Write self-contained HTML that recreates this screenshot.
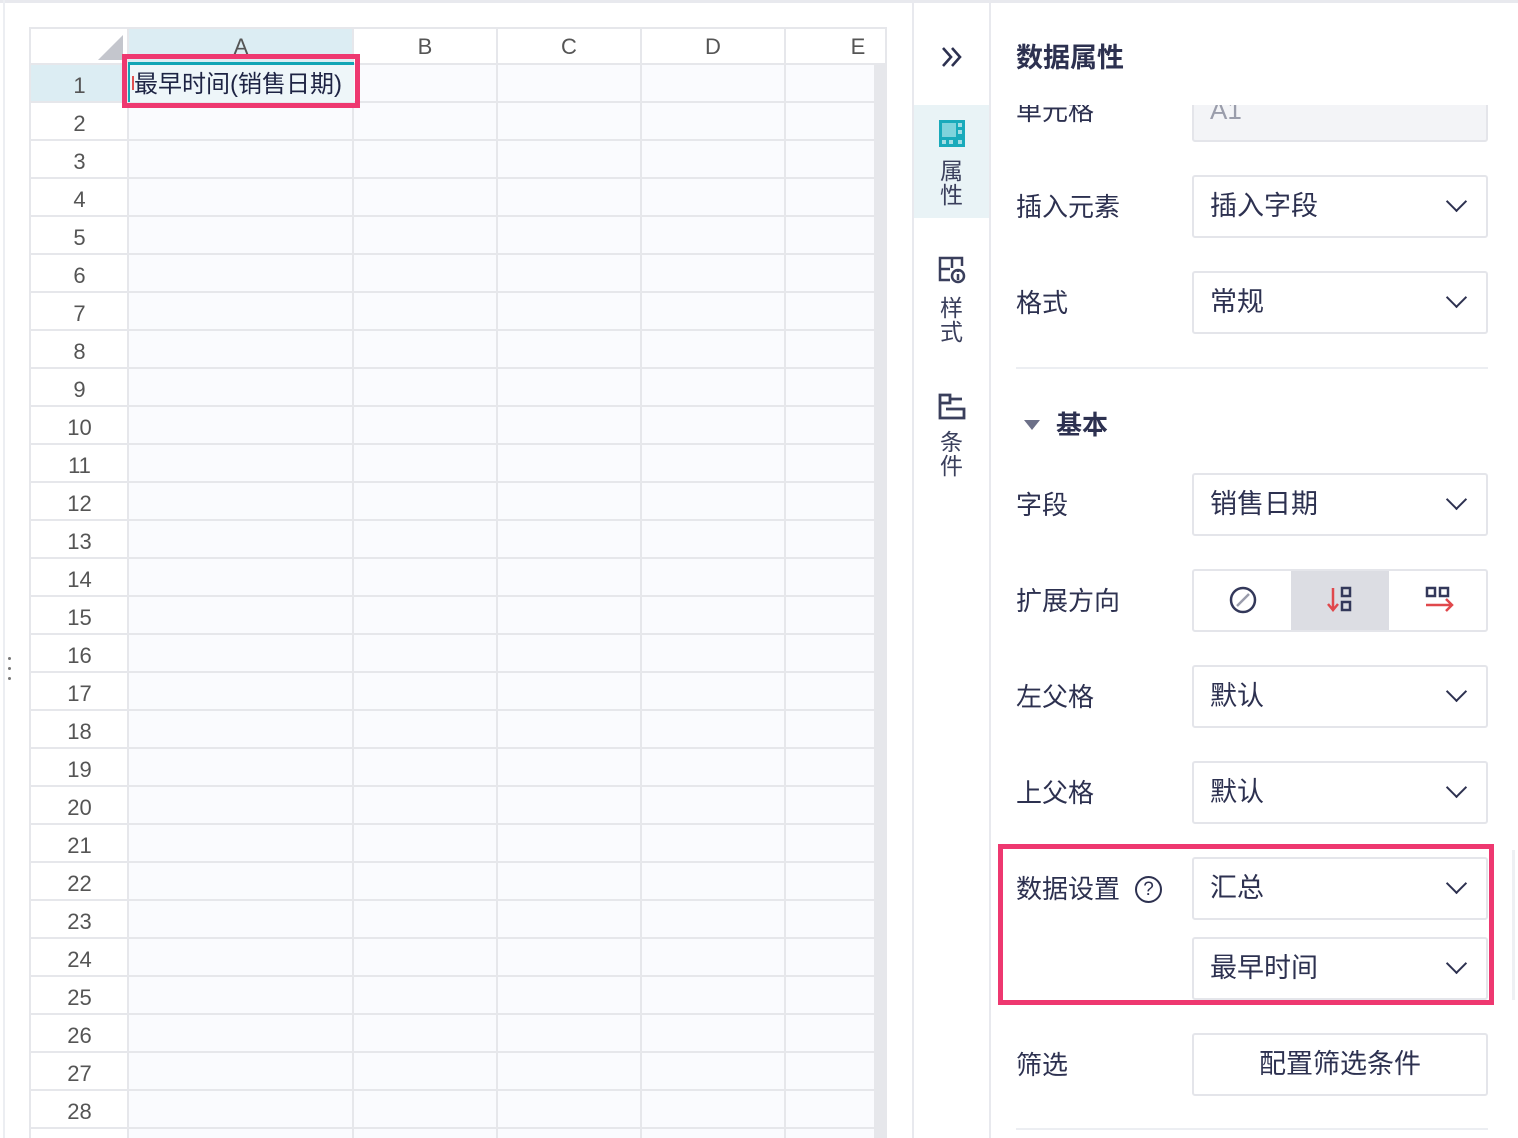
<!DOCTYPE html>
<html><head><meta charset="utf-8"><style>
*{margin:0;padding:0;box-sizing:border-box}
body{width:1518px;height:1138px;overflow:hidden;background:#fff;font-family:"Liberation Sans","Noto Sans CJK SC",sans-serif;color:#2d3150;position:relative}
.a{position:absolute}
.hdr{font-size:22px;color:#555;text-align:center;line-height:40px}
.rn{position:absolute;left:31px;width:97px;height:38px;line-height:42px;text-align:center;font-size:22px;color:#555;border-bottom:2px solid #e6e7eb}
.lbl{position:absolute;left:1016px;font-size:26px;line-height:36px;color:#2d3150}
.box{position:absolute;left:1192px;width:296px;height:63px;border:2px solid #e4e5ea;border-radius:3px;background:#fff;font-size:27px;line-height:59px;padding-left:16px}
.chev{position:absolute;right:22px;top:17px;width:15px;height:15px;border-right:2.5px solid #2d3150;border-bottom:2.5px solid #2d3150;transform:rotate(45deg)}
.sb{position:absolute;left:913px;width:77px;text-align:center;font-size:23px;line-height:24px;color:#3a3f5c}
</style></head><body>
<div class="a" style="left:0;top:0;width:1518px;height:3px;background:#e8e9ee"></div>
<div class="a" style="left:3px;top:0;width:2px;height:1138px;background:#eceef2"></div>
<div class="a" style="left:8px;top:657px;width:3px;height:3px;background:#777;border-radius:2px"></div>
<div class="a" style="left:8px;top:667px;width:3px;height:3px;background:#777;border-radius:2px"></div>
<div class="a" style="left:8px;top:677px;width:3px;height:3px;background:#777;border-radius:2px"></div>
<div class="a" style="left:29px;top:27px;width:858px;height:1111px;border:2px solid #e6e7eb;border-bottom:none;background:#fff"></div>
<div class="a" style="left:128px;top:65px;width:746px;height:1073px;background-color:#fafbfe;background-image:repeating-linear-gradient(to bottom,transparent 0 36px,#e6e7eb 36px 38px)"></div>
<div class="a" style="left:127px;top:27px;width:2px;height:1111px;background:#e6e7eb"></div>
<div class="a" style="left:352px;top:27px;width:2px;height:1111px;background:#e6e7eb"></div>
<div class="a" style="left:496px;top:27px;width:2px;height:1111px;background:#e6e7eb"></div>
<div class="a" style="left:640px;top:27px;width:2px;height:1111px;background:#e6e7eb"></div>
<div class="a" style="left:784px;top:27px;width:2px;height:1111px;background:#e6e7eb"></div>
<div class="a" style="left:29px;top:63px;width:858px;height:2px;background:#e6e7eb"></div>
<div class="a" style="left:874px;top:65px;width:13px;height:1073px;background:#e6e7eb"></div>
<div class="a" style="left:129px;top:29px;width:223px;height:34px;background:#dcedf3"></div>
<div class="a" style="left:31px;top:65px;width:96px;height:36px;background:#dcedf3"></div>
<div class="a" style="left:98px;top:35px;width:0;height:0;border-left:25px solid transparent;border-bottom:25px solid #c4c6cd"></div>
<div class="a hdr" style="left:129px;top:27px;width:224px">A</div>
<div class="a hdr" style="left:354px;top:27px;width:142px">B</div>
<div class="a hdr" style="left:498px;top:27px;width:142px">C</div>
<div class="a hdr" style="left:642px;top:27px;width:142px">D</div>
<div class="a hdr" style="left:786px;top:27px;width:144px">E</div>
<div class="rn" style="top:65px">1</div><div class="rn" style="top:103px">2</div><div class="rn" style="top:141px">3</div><div class="rn" style="top:179px">4</div><div class="rn" style="top:217px">5</div><div class="rn" style="top:255px">6</div><div class="rn" style="top:293px">7</div><div class="rn" style="top:331px">8</div><div class="rn" style="top:369px">9</div><div class="rn" style="top:407px">10</div><div class="rn" style="top:445px">11</div><div class="rn" style="top:483px">12</div><div class="rn" style="top:521px">13</div><div class="rn" style="top:559px">14</div><div class="rn" style="top:597px">15</div><div class="rn" style="top:635px">16</div><div class="rn" style="top:673px">17</div><div class="rn" style="top:711px">18</div><div class="rn" style="top:749px">19</div><div class="rn" style="top:787px">20</div><div class="rn" style="top:825px">21</div><div class="rn" style="top:863px">22</div><div class="rn" style="top:901px">23</div><div class="rn" style="top:939px">24</div><div class="rn" style="top:977px">25</div><div class="rn" style="top:1015px">26</div><div class="rn" style="top:1053px">27</div><div class="rn" style="top:1091px">28</div>
<div class="a" style="left:128px;top:62px;width:226px;height:40px;background:#eef6f9;border:3px solid #12a5b5;border-width:3px 0 0 2px"></div>
<div class="a" style="left:134px;top:66px;font-size:24px;line-height:38px;color:#1e2444;white-space:nowrap">最早时间(销售日期)</div>
<div class="a" style="left:132px;top:76px;width:2px;height:14px;background:#e05050"></div>
<div class="a" style="left:122px;top:54px;width:238px;height:54px;border:5px solid #ee3870"></div>
<div class="a" style="left:912px;top:0;width:2px;height:1138px;background:#e8e9ee"></div>
<div class="a" style="left:989px;top:0;width:2px;height:1138px;background:#e8e9ee"></div>
<svg class="a" style="left:940px;top:46px" width="24" height="22" viewBox="0 0 24 22" fill="none" stroke="#2d3150" stroke-width="2.6"><path d="M3 2l8 9-8 9M12 2l8 9-8 9"/></svg>
<div class="a" style="left:914px;top:105px;width:75px;height:113px;background:#e9f3f6"></div>
<svg class="a" style="left:939px;top:120px" width="26" height="27" viewBox="0 0 26 27"><rect width="26" height="27" fill="#19aabb"/><rect x="3" y="3" width="14" height="14" fill="#7fd3dc"/><rect x="19" y="3" width="4" height="4" fill="#fff" opacity=".6"/><rect x="19" y="10" width="4" height="4" fill="#fff" opacity=".6"/><rect x="3" y="20" width="4" height="4" fill="#fff" opacity=".6"/><rect x="10" y="20" width="4" height="4" fill="#fff" opacity=".6"/><rect x="19" y="20" width="4" height="4" fill="#fff" opacity=".6"/></svg>
<div class="sb" style="top:159px">属<br>性</div>
<svg class="a" style="left:938px;top:256px" width="28" height="28" viewBox="0 0 28 28" fill="none" stroke="#3a3f5c" stroke-width="2.5"><path d="M14 2H2v22h10M2 13h10M14 2v10M14 2h10v8"/><circle cx="20" cy="20" r="6"/><path d="M20 18v6M20 15v1"/></svg>
<div class="sb" style="top:296px">样<br>式</div>
<svg class="a" style="left:938px;top:393px" width="28" height="28" viewBox="0 0 28 28" fill="none" stroke="#3a3f5c" stroke-width="2.8"><path d="M2 2h10v8H2zM12 6h12M2 10v15h24V16H8"/></svg>
<div class="sb" style="top:430px">条<br>件</div>
<div class="a" style="left:1016px;top:40px;font-size:27px;font-weight:bold;line-height:36px">数据属性</div>
<div class="a" style="left:991px;top:105px;width:527px;height:1033px;overflow:hidden">
 <div class="lbl" style="left:25px;top:-12px">单元格</div>
 <div class="a" style="left:201px;top:-10px;width:296px;height:47px;background:#f3f4f7;border:2px solid #e4e5ea;border-radius:3px;font-size:26px;color:#9a9dab;padding-left:16px;line-height:26px">A1</div>
</div>
<div class="lbl" style="top:189px">插入元素</div>
<div class="box" style="top:175px">插入字段<i class="chev"></i></div>
<div class="lbl" style="top:285px">格式</div>
<div class="box" style="top:271px">常规<i class="chev"></i></div>
<div class="a" style="left:1016px;top:367px;width:472px;height:2px;background:#eceef2"></div>
<div class="a" style="left:1024px;top:420px;width:0;height:0;border-left:8px solid transparent;border-right:8px solid transparent;border-top:10px solid #6c7088"></div>
<div class="a" style="left:1056px;top:407px;font-size:26px;font-weight:bold;line-height:36px">基本</div>
<div class="lbl" style="top:487px">字段</div>
<div class="box" style="top:473px">销售日期<i class="chev"></i></div>
<div class="lbl" style="top:583px">扩展方向</div>
<div class="box" style="top:569px;padding:0">
 <div class="a" style="left:97px;top:0;width:98px;height:59px;background:#dcdde3"></div>
 <svg class="a" style="left:34px;top:14px" width="30" height="30" viewBox="0 0 30 30" fill="none"><circle cx="15" cy="15" r="12" stroke="#33385a" stroke-width="2.5"/><path d="M9 21L21 9" stroke="#9a9cab" stroke-width="2.5"/></svg>
 <svg class="a" style="left:132px;top:14px" width="30" height="30" viewBox="0 0 30 30" fill="none"><path d="M7 3v22M2 19l5 6 5-6" stroke="#e0484c" stroke-width="2.5"/><rect x="16" y="3" width="8" height="8" stroke="#33385a" stroke-width="2.5"/><rect x="16" y="17" width="8" height="8" stroke="#33385a" stroke-width="2.5"/></svg>
 <svg class="a" style="left:230px;top:14px" width="32" height="30" viewBox="0 0 32 30" fill="none"><rect x="3" y="3" width="8" height="8" stroke="#33385a" stroke-width="2.5"/><rect x="16" y="3" width="8" height="8" stroke="#33385a" stroke-width="2.5"/><path d="M2 20h26M22 14l6 6-6 6" stroke="#e0484c" stroke-width="2.5"/></svg>
</div>
<div class="lbl" style="top:679px">左父格</div>
<div class="box" style="top:665px">默认<i class="chev"></i></div>
<div class="lbl" style="top:775px">上父格</div>
<div class="box" style="top:761px">默认<i class="chev"></i></div>
<div class="lbl" style="top:871px">数据设置</div>
<div class="a" style="left:1135px;top:876px;width:27px;height:27px;border:2px solid #2d3150;border-radius:50%;font-size:19px;line-height:23px;text-align:center">?</div>
<div class="box" style="top:857px">汇总<i class="chev"></i></div>
<div class="box" style="top:937px">最早时间<i class="chev"></i></div>
<div class="a" style="left:998px;top:844px;width:496px;height:161px;border:5px solid #ee3870"></div>
<div class="lbl" style="top:1047px">筛选</div>
<div class="box" style="top:1033px;padding:0;text-align:center">配置筛选条件</div>
<div class="a" style="left:1016px;top:1128px;width:472px;height:2px;background:#eceef2"></div>
<div class="a" style="left:1512px;top:850px;width:3px;height:150px;background:#eef0f3"></div>
</body></html>
